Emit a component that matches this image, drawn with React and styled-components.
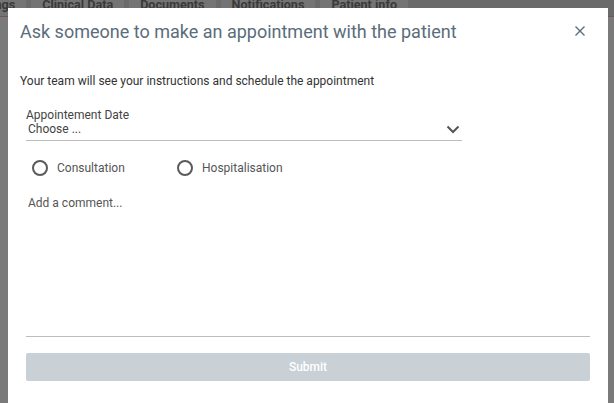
import React from "react";
import styled, { createGlobalStyle } from "styled-components";

const GlobalStyle = createGlobalStyle`
  html, body {
    margin: 0;
    padding: 0;
    height: 100%;
    overflow: hidden;
    background: #fff;
    font-family: Roboto, "Liberation Sans", sans-serif;
  }
`;

const Page = styled.div`
  position: relative;
  width: 100vw;
  height: 100vh;
  overflow: hidden;
`;

const TabBar = styled.nav`
  display: flex;
  align-items: flex-start;
  gap: 5px;
  height: 24px;
  margin-top: -8px;
  border-bottom: 1px solid #e8b4b8;
  background: #dedede;
`;

const Tab = styled.div`
  padding: 5px 11px 0;
  height: 19px;
  font-size: 12.6px;
  font-weight: 700;
  color: #7a7a7a;
  background: #f2f2f2;
  white-space: nowrap;
  margin-left: ${(p) => p.offset || 0}px;
`;

const Backdrop = styled.div`
  position: absolute;
  inset: 0;
  background: rgba(0, 0, 0, 0.52);
`;

const Dialog = styled.div`
  position: absolute;
  top: 8px;
  left: 8px;
  right: 6px;
  bottom: -20px;
  background: #fff;
  padding: 0 18px 0 12px;
  box-sizing: border-box;
`;

const Header = styled.div`
  display: flex;
  align-items: center;
  justify-content: space-between;
  height: 46px;
`;

const Title = styled.h2`
  margin: 0;
  font-size: 18px;
  font-weight: 400;
  color: #5b6d7a;
`;

const Close = styled.button`
  border: 0;
  background: none;
  padding: 0;
  width: 12px;
  height: 12px;
  margin-right: 4px;
  display: flex;
  cursor: pointer;
`;

const Intro = styled.p`
  margin: 20px 0 0;
  font-size: 12px;
  color: #333;
`;

const Form = styled.form`
  padding-left: 6px;
  margin-top: 20px;
`;

const Select = styled.div`
  width: 436px;
  border-bottom: 1px solid #bdbdbd;
  padding-bottom: 3px;
`;

const Label = styled.div`
  font-size: 12px;
  color: #444;
  line-height: 14px;
`;

const SelectRow = styled.div`
  display: flex;
  align-items: center;
  justify-content: space-between;
  padding-left: 2px;
  font-size: 12px;
  line-height: 15px;
  color: #444;
`;

const Radios = styled.div`
  display: flex;
  margin-top: 19px;
  padding-left: 6px;
`;

const Radio = styled.label`
  display: flex;
  align-items: center;
  gap: 9px;
  width: 145px;
  font-size: 12px;
  color: #555;
  &::before {
    content: "";
    width: 12px;
    height: 12px;
    border: 2px solid #5a5a5a;
    border-radius: 50%;
  }
`;

const Comment = styled.div`
  margin-top: 20px;
  height: 140px;
  border-bottom: 1px solid #bdbdbd;
  padding-left: 2px;
  font-size: 12px;
  color: #555;
`;

const Submit = styled.button`
  display: block;
  width: 100%;
  height: 28px;
  margin-top: 16px;
  border: 0;
  border-radius: 2px;
  background: #c9d1d7;
  color: #fff;
  font-family: Roboto, "Liberation Sans", sans-serif;
  font-size: 12px;
  font-weight: 500;
`;

export default function App() {
  return (
    <Page>
      <GlobalStyle />
      <TabBar>
        <Tab offset={-43}>Settings</Tab>
        <Tab>Clinical Data</Tab>
        <Tab>Documents</Tab>
        <Tab>Notifications</Tab>
        <Tab>Patient info</Tab>
      </TabBar>
      <Backdrop />
      <Dialog>
        <Header>
          <Title>Ask someone to make an appointment with the patient</Title>
          <Close aria-label="Close">
            <svg width="12" height="12" viewBox="0 0 12 12">
              <path d="M1.5 1.5l9 9M10.5 1.5l-9 9" stroke="#5b6d7a" strokeWidth="1.4" />
            </svg>
          </Close>
        </Header>
        <Intro>Your team will see your instructions and schedule the appointment</Intro>
        <Form>
          <Select>
            <Label>Appointement Date</Label>
            <SelectRow>
              Choose ...
              <svg width="14" height="9" viewBox="0 0 14 9" style={{ marginRight: 2 }}>
                <path d="M1.5 1.5l5.5 5.5 5.5-5.5" fill="none" stroke="#555" strokeWidth="2" />
              </svg>
            </SelectRow>
          </Select>
          <Radios>
            <Radio>Consultation</Radio>
            <Radio>Hospitalisation</Radio>
          </Radios>
          <Comment>Add a comment...</Comment>
          <Submit type="button">Submit</Submit>
        </Form>
      </Dialog>
    </Page>
  );
}
